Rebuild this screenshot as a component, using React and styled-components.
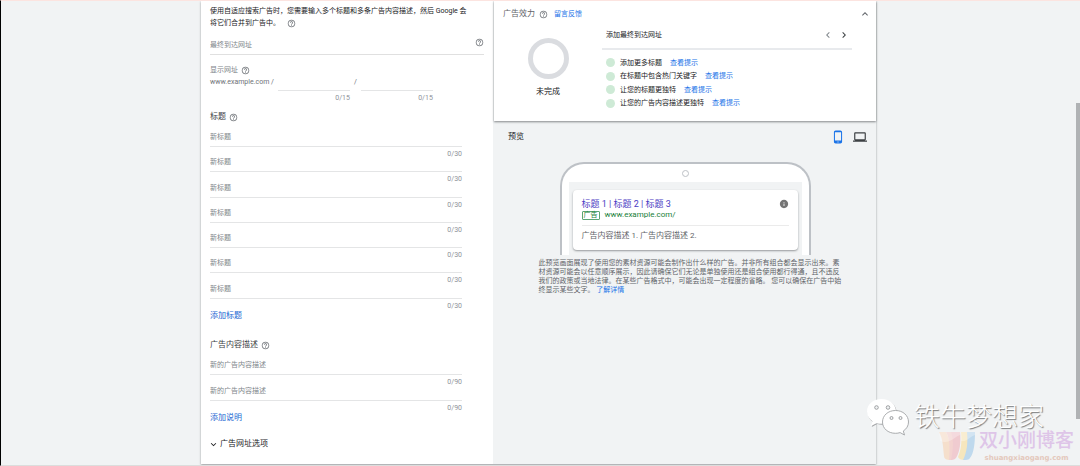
import styled, { createGlobalStyle } from "styled-components";
import {
    MdChevronLeft,
    MdChevronRight,
    MdExpandLess,
    MdExpandMore,
    MdHelpOutline,
    MdInfo,
    MdLaptop,
    MdPhoneAndroid,
} from "react-icons/md";

const tips = ["添加更多标题", "在标题中包含热门关键字", "让您的标题更独特", "让您的广告内容描述更独特"];

const FieldRows = ({ count, label, max }) => (
    <Fields $count={count}>
        {Array.from({ length: count }, (_, i) => (
            <Field key={i}>
                <TextInput aria-label={`${label} ${i + 1}`} placeholder={label} />
                <Counter>0/{max}</Counter>
            </Field>
        ))}
    </Fields>
);

const AdForm = () => (
    <FormPanel>
        <Intro>
            使用自适应搜索广告时，您需要输入多个标题和多条广告内容描述，然后 Google 会
            <br />
            将它们合并到广告中。
            <HelpIcon $gap={7} />
        </Intro>
        <UrlField>
            <TextInput aria-label="最终到达网址" placeholder="最终到达网址" />
            <HelpIcon />
        </UrlField>
        <PathLabel>
            显示网址
            <HelpIcon />
        </PathLabel>
        <PathRow>
            <span>www.example.com /</span>
            <PathField>
                <TextInput aria-label="路径 1" />
                <PathCounter>0/15</PathCounter>
            </PathField>
            <span>/</span>
            <PathField>
                <TextInput aria-label="路径 2" />
                <PathCounter>0/15</PathCounter>
            </PathField>
        </PathRow>
        <SectionTitle>
            标题
            <HelpIcon />
        </SectionTitle>
        <FieldRows count={7} label="新标题" max={30} />
        <AddButton type="button">添加标题</AddButton>
        <SectionTitle $top={17}>
            广告内容描述
            <HelpIcon />
        </SectionTitle>
        <FieldRows count={2} label="新的广告内容描述" max={90} />
        <AddButton type="button">添加说明</AddButton>
        <UrlOptions type="button">
            <MdExpandMore size={11} />
            广告网址选项
        </UrlOptions>
    </FormPanel>
);

const AdStrength = () => (
    <StrengthCard>
        <StrengthHeader>
            <StrengthTitle>广告效力</StrengthTitle>
            <HelpIcon />
            <Feedback href="#feedback">留言反馈</Feedback>
            <IconButton type="button" aria-label="收起">
                <MdExpandLess size={12} />
            </IconButton>
        </StrengthHeader>
        <StrengthBody>
            <Status>
                <Ring />
                未完成
            </Status>
            <Suggestions>
                <SuggestionHeader>
                    <span>添加最终到达网址</span>
                    <Pager>
                        <IconButton type="button" aria-label="上一条">
                            <MdChevronLeft size={12} />
                        </IconButton>
                        <IconButton type="button" aria-label="下一条" $dark>
                            <MdChevronRight size={12} />
                        </IconButton>
                    </Pager>
                </SuggestionHeader>
                <TipList>
                    {tips.map((tip) => (
                        <Tip key={tip}>
                            {tip}
                            <a href="#tips">查看提示</a>
                        </Tip>
                    ))}
                </TipList>
            </Suggestions>
        </StrengthBody>
    </StrengthCard>
);

const Preview = () => (
    <PreviewPanel>
        <PreviewHeader>
            <span>预览</span>
            <Devices>
                <IconButton type="button" aria-label="手机" $active>
                    <MdPhoneAndroid size={14} />
                </IconButton>
                <IconButton type="button" aria-label="电脑" $dark>
                    <MdLaptop size={14} />
                </IconButton>
            </Devices>
        </PreviewHeader>
        <Phone>
            <Speaker />
            <Screen>
                <AdCard>
                    <AdTitle>
                        <span>标题 1 | 标题 2 | 标题 3</span>
                        <MdInfo size={10} />
                    </AdTitle>
                    <AdUrl>
                        <AdBadge>广告</AdBadge>
                        www.example.com/
                    </AdUrl>
                    <AdText>广告内容描述 1. 广告内容描述 2.</AdText>
                </AdCard>
            </Screen>
        </Phone>
        <Disclaimer>
            此预览画面展现了使用您的素材资源可能会制作出什么样的广告。并非所有组合都会显示出来。素
            <br />
            材资源可能会以任意顺序展示，因此请确保它们无论是单独使用还是组合使用都行得通，且不违反
            <br />
            我们的政策或当地法律。在某些广告格式中，可能会出现一定程度的省略。 您可以确保在广告中始
            <br />
            终显示某些文字。 <a href="#details">了解详情</a>
        </Disclaimer>
    </PreviewPanel>
);

const WechatLogo = () => (
    <svg width="44" height="38" viewBox="0 0 44 38">
        <g fill="#a2a4a6" transform="translate(0.700 0.900)">
            <path d="M15.500 1C7 1 1 6.500 1 13.500c0 4 2 7.500 5.500 9.800L5 28l5.500-2.800c1.600.4 3.300.6 5 .6 8.500 0 14.500-5.500 14.500-12.300S24 1 15.500 1z" />
        </g>
        <path
            d="M15.500 1C7 1 1 6.500 1 13.500c0 4 2 7.500 5.500 9.800L5 28l5.500-2.800c1.600.4 3.300.6 5 .6 8.500 0 14.500-5.500 14.500-12.300S24 1 15.500 1z"
            fill="#fff"
        />
        <path
            d="M29.500 12.500C22 12.500 16.500 17.500 16.500 24s5.500 11.300 13 11.300c1.600 0 3.200-.2 4.600-.7l4.400 2.400-1.200-4c3.200-2 5.200-5.200 5.200-9 0-6.500-5.500-11.500-13-11.500z"
            fill="#fff"
            stroke="#a2a4a6"
            strokeWidth="0.9"
        />
        <g fill="#f1f3f4" stroke="#8c8e90" strokeWidth="0.8">
            <circle cx="10.500" cy="9.500" r="1.800" />
            <circle cx="22" cy="9.500" r="1.800" />
            <circle cx="25.500" cy="20" r="1.500" />
            <circle cx="34.500" cy="20" r="1.500" />
        </g>
    </svg>
);

const BlogLogo = () => (
    <svg width="38" height="30" viewBox="0 0 38 30">
        <path d="M1 1h7c4 7 5 17 4 28-3 0-6-1-6-4C5 16 5 8 1 1z" fill="#f5dfcc" />
        <path d="M12 1h10c1 10 0 20-4 26-2 2-4 2-6 2 2-9 3-19 0-28z" fill="#f0cbd0" />
        <path d="M8 1h5c3 9 2 19 0 28h-2C12 18 12 8 8 1z" fill="#f3d3d0" />
        <path d="M23 1h8c0 11-1 21-5 28-3 0-5-1-6-3 3-7 4-15 3-25z" fill="#f6e6bd" />
        <path d="M29 1h8c0 11-1 21-5 26-1 2-4 2-7 2 4-8 5-17 4-28z" fill="#bfd9ed" />
        <path d="M2 10c9 4 14-4 20-6v-3H1z" fill="#fff" opacity="0.3" />
        <path d="M23 10c6 1 8-4 14-6V1H23z" fill="#fff" opacity="0.3" />
    </svg>
);

const App = () => {
    return (
        <>
            <GlobalStyle />
            <Page>
                <Workspace>
                    <AdForm />
                    <SideColumn>
                        <AdStrength />
                        <Preview />
                    </SideColumn>
                </Workspace>
                <ScrollThumb />
                <ChannelMark>
                    <WechatLogo />
                    铁牛梦想家
                </ChannelMark>
                <BlogMark>
                    <BlogLogo />
                    <BlogName>
                        双小刚博客
                        <small>shuangxiaogang.com</small>
                    </BlogName>
                </BlogMark>
            </Page>
        </>
    );
};

export default App;

const GlobalStyle = createGlobalStyle`
    * {
        box-sizing: border-box;
    }

    body {
        margin: 0;
        background-color: #f1f3f4;
        color: #3c4043;
        font-family: Roboto, "Noto Sans CJK SC", sans-serif;
        font-size: 7px;
        line-height: 12px;
    }

    a {
        color: #1a73e8;
        text-decoration: none;
    }

    button,
    input {
        border: 0;
        padding: 0;
        background: none;
        font: inherit;
    }

    svg {
        display: block;
        flex: none;
    }
`;

const Page = styled.div`
    position: relative;
    display: flex;
    justify-content: center;
    min-height: 100vh;
    overflow: hidden;
    padding: 0 4px 1px 0;
    border-top: 1px solid #fce4e0;
    border-bottom: 1px solid #dcdddc;
    border-left: 1px solid #000;
`;

const Workspace = styled.main`
    display: grid;
    grid-template-columns: 292px 1fr;
    gap: 1px;
    width: 100%;
    max-width: 675px;
    box-shadow: 0 1px 2px rgba(60, 64, 67, 0.5);
`;

const HelpIcon = styled(MdHelpOutline).attrs({ size: 9 })`
    display: inline-block;
    flex: none;
    margin-left: ${({ $gap }) => $gap || 0}px;
    color: #6f7378;
    vertical-align: middle;
`;

const FormPanel = styled.section`
    display: flex;
    flex-direction: column;
    padding: 4px 9px 12px;
    background-color: #fff;
`;

const Intro = styled.p`
    margin: 0;
    color: #202124;
    white-space: nowrap;
`;

const TextInput = styled.input`
    display: block;
    width: 100%;
    min-width: 0;
    height: 15px;
    padding-bottom: 4px;
    border-bottom: 1px solid #e4e5e6;
    border-radius: 0;
    color: #3c4043;
    line-height: 10px;
    outline: none;

    &::placeholder {
        color: #80868b;
        opacity: 1;
    }
`;

const UrlField = styled.div`
    display: flex;
    align-items: flex-start;
    margin: 9px 0;
    border-bottom: 1px solid #e0e0e0;

    ${TextInput} {
        height: 16px;
        padding-bottom: 2px;
        border-bottom: 0;
    }
`;

const PathLabel = styled.div`
    display: flex;
    align-items: center;
    gap: 3px;
    color: #80868b;
`;

const PathRow = styled.div`
    display: flex;
    gap: 4px;
    color: #6f7378;
`;

const PathField = styled.div`
    width: 72px;
`;

const Counter = styled.div`
    height: 10px;
    color: #8d9298;
    line-height: 14px;
    text-align: right;
`;

const PathCounter = styled(Counter)`
    height: 14px;
`;

const SectionTitle = styled.h2`
    display: flex;
    align-items: center;
    gap: 3px;
    margin: ${({ $top }) => $top || 6}px 0 9px;
    font-size: 8px;
    font-weight: 400;
`;

/* rows share the height evenly, a little over 25px each */
const Fields = styled.div`
    display: flex;
    flex-direction: column;
    min-height: ${({ $count }) => Math.round(($count * 76) / 3)}px;
    padding-right: 22px;
`;

const Field = styled.div`
    flex: 1;
`;

const AddButton = styled.button`
    align-self: flex-start;
    margin-top: 1px;
    color: #1967d2;
    font-size: 8px;
    cursor: pointer;
`;

const UrlOptions = styled.button`
    display: flex;
    align-items: center;
    align-self: flex-start;
    gap: 1px;
    margin: 14px 0 0 -2px;
    color: #202124;
    font-size: 8px;
    cursor: pointer;
`;

const SideColumn = styled.div`
    display: flex;
    flex-direction: column;
    min-width: 0;
`;

const StrengthCard = styled.section`
    padding: 7px 5px 11px 9px;
    background-color: #fff;
    box-shadow: 0 1px 2px rgba(60, 64, 67, 0.6);
`;

const IconButton = styled.button`
    color: ${({ $active, $dark }) => ($active ? "#1a73e8" : $dark ? "#3c4043" : "#80868b")};
    cursor: pointer;
`;

const StrengthHeader = styled.div`
    display: flex;
    align-items: center;
    gap: 4px;

    ${IconButton} {
        margin-left: auto;
        color: #5f6368;
    }
`;

const StrengthTitle = styled.span`
    color: #5f6368;
    font-size: 8px;
`;

const Feedback = styled.a`
    margin-left: 2px;
`;

const StrengthBody = styled.div`
    display: flex;
    gap: 9px;
    padding-right: 19px;
`;

const Status = styled.div`
    display: flex;
    flex-direction: column;
    align-items: center;
    gap: 7px;
    width: 90px;
    padding-top: 18px;
    color: #202124;
    font-size: 8px;
`;

const Ring = styled.div`
    width: 41px;
    height: 41px;
    border: 5px solid #dadce0;
    border-radius: 50%;
`;

const Suggestions = styled.div`
    flex: 1;
    color: #202124;
`;

const SuggestionHeader = styled.div`
    display: flex;
    align-items: center;
    justify-content: space-between;
    height: 30px;
    padding: 1px 2px 0 4px;
    border-bottom: 2px solid #e8eaed;
`;

const Pager = styled.div`
    display: flex;
    gap: 4px;
`;

const TipList = styled.ul`
    display: flex;
    flex-direction: column;
    min-height: 54px;
    margin: 6px 0 0;
    padding: 0 0 0 4px;
    list-style: none;
`;

const Tip = styled.li`
    display: flex;
    flex: 1;
    align-items: center;

    &::before {
        content: "";
        width: 9px;
        height: 9px;
        margin-right: 5px;
        border-radius: 50%;
        background-color: #ceead6;
    }

    a {
        margin-left: 8px;
    }
`;

const PreviewPanel = styled.section`
    flex: 1;
    padding: 8px 9px 0;
`;

const PreviewHeader = styled.div`
    display: flex;
    align-items: center;
    justify-content: space-between;
    height: 16px;
    padding-left: 5px;
    color: #202124;
    font-size: 8px;
`;

const Devices = styled.div`
    display: flex;
    gap: 8px;
`;

const Phone = styled.div`
    display: flex;
    flex-direction: column;
    align-items: center;
    width: 251px;
    margin: 17px auto 0;
    padding: 6px 7px 0;
    border: 2px solid #bdc1c6;
    border-bottom: 0;
    border-radius: 24px 24px 0 0;
    background-color: #fff;
`;

const Speaker = styled.div`
    width: 7px;
    height: 7px;
    margin-bottom: 5px;
    border: 1px solid #bdc1c6;
    border-radius: 50%;
`;

const Screen = styled.div`
    width: 100%;
    padding: 8px 4px 5px;
    background-color: #f1f3f4;
`;

const AdCard = styled.article`
    padding: 8px 9px;
    border-radius: 4px;
    background-color: #fff;
    box-shadow: 0 1px 2px rgba(60, 64, 67, 0.5);
`;

const AdTitle = styled.div`
    display: flex;
    align-items: center;
    justify-content: space-between;
    color: #4a3bc4;
    font-size: 9px;

    svg {
        color: #757575;
    }
`;

const AdUrl = styled.div`
    display: flex;
    align-items: center;
    gap: 5px;
    height: 16px;
    padding-bottom: 5px;
    border-bottom: 1px solid #ebebeb;
    color: #188038;
    font-size: 8px;
`;

const AdBadge = styled.span`
    padding: 0 1px;
    border: 1px solid #5ba573;
    border-radius: 1px;
    font-size: 7px;
    line-height: 7px;
`;

const AdText = styled.p`
    margin: 4px 0 0;
    color: #5f6368;
    font-size: 8px;
`;

const Disclaimer = styled.p`
    width: 293px;
    margin: 4px auto 0;
    color: #5f6368;
    line-height: 9px;
    white-space: nowrap;
`;

const ScrollThumb = styled.div`
    position: absolute;
    top: 22%;
    right: 0;
    bottom: 10%;
    width: 4px;
    background-color: #b0b2b4;
`;

const ChannelMark = styled.div`
    position: absolute;
    right: 36px;
    bottom: 29px;
    display: flex;
    align-items: center;
    gap: 4px;
    color: #fff;
    font-size: 26px;
    font-weight: 300;
    line-height: 38px;
    text-shadow: 1px 1px 1px #77797b;
`;

const BlogMark = styled.div`
    position: absolute;
    right: 6px;
    bottom: 2px;
    display: flex;
    align-items: center;
    gap: 3px;
`;

const BlogName = styled.div`
    display: flex;
    flex-direction: column;
    align-items: center;
    color: #dec5e8;
    font-size: 19px;
    font-weight: 500;
    line-height: 24px;

    small {
        color: #e4c8bc;
        font-family: "DejaVu Sans", sans-serif;
        font-size: 7px;
        font-weight: 700;
        line-height: 10px;
    }
`;
